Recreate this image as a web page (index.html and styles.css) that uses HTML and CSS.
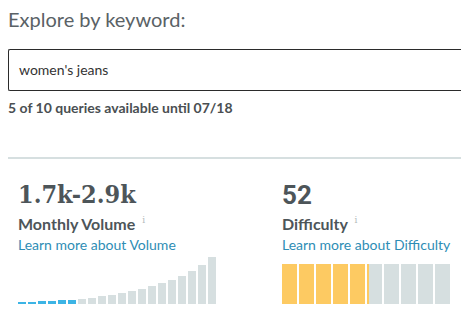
FILE: index.html
```html
<!DOCTYPE html>
<html lang="en">
<head>
    <meta charset="UTF-8">
    <meta name="viewport" content="width=device-width, initial-scale=1.0">
    <title>Explore by keyword</title>
    <link rel="stylesheet" href="styles.css">
</head>
<body>
    <div class="explorer">
        <h1>Explore by keyword:</h1>

        <div class="search-box">women's jeans</div>
        <p class="quota">5 of 10 queries available until 07/18</p>

        <hr class="divider">

        <div class="metrics">
            <div class="metric">
                <div class="metric-value slab">1.7k-2.9k</div>
                <div class="metric-label">Monthly Volume <sup class="info">i</sup></div>
                <a class="metric-link" href="#">Learn more about Volume</a>
                <div class="volume-chart">
                    <span class="bar on" style="height: 2px"></span>
                    <span class="bar on" style="height: 2px"></span>
                    <span class="bar on" style="height: 3px"></span>
                    <span class="bar on" style="height: 3px"></span>
                    <span class="bar on" style="height: 4px"></span>
                    <span class="bar on" style="height: 4px"></span>
                    <span class="bar" style="height: 5px"></span>
                    <span class="bar" style="height: 6px"></span>
                    <span class="bar" style="height: 8px"></span>
                    <span class="bar" style="height: 9px"></span>
                    <span class="bar" style="height: 11px"></span>
                    <span class="bar" style="height: 13px"></span>
                    <span class="bar" style="height: 15px"></span>
                    <span class="bar" style="height: 18px"></span>
                    <span class="bar" style="height: 21px"></span>
                    <span class="bar" style="height: 24px"></span>
                    <span class="bar" style="height: 28px"></span>
                    <span class="bar" style="height: 33px"></span>
                    <span class="bar" style="height: 39px"></span>
                    <span class="bar" style="height: 47px"></span>
                </div>
            </div>

            <div class="metric">
                <div class="metric-value sans">52</div>
                <div class="metric-label">Difficulty <sup class="info">i</sup></div>
                <a class="metric-link" href="#">Learn more about Difficulty</a>
                <div class="difficulty-chart">
                    <span class="seg on"></span>
                    <span class="seg on"></span>
                    <span class="seg on"></span>
                    <span class="seg on"></span>
                    <span class="seg on"></span>
                    <span class="seg part"></span>
                    <span class="seg"></span>
                    <span class="seg"></span>
                    <span class="seg"></span>
                    <span class="seg"></span>
                </div>
            </div>
        </div>
    </div>
</body>
</html>
```

FILE: styles.css
```css
body {
    margin: 0;
    font-family: Lato, "Open Sans", sans-serif;
    color: #4d5559;
    background-color: #fff;
    overflow: hidden;
}
.explorer {
    padding-left: 8px;
}
h1 {
    margin: 7px 0 0;
    font-size: 20px;
    font-weight: normal;
    line-height: 24px;
    color: #5a6266;
}
.search-box {
    height: 40px;
    margin-top: 18px;
    padding-left: 10px;
    border: 1px solid #2b2b2b;
    border-right: none;
    border-radius: 2px 0 0 2px;
    font-size: 14px;
    line-height: 40px;
    color: #333;
}
.quota {
    margin: 9px 0 0;
    font-size: 14px;
    font-weight: bold;
    line-height: 16px;
    color: #4a4f52;
}
.divider {
    margin: 41px 0 0;
    height: 2px;
    border: none;
    background-color: #d6dfe0;
}
.metrics {
    display: grid;
    grid-template-columns: 264px 180px;
    padding-left: 10px;
}
.metric-value {
    margin-top: 21px;
    height: 30px;
    line-height: 30px;
    font-weight: bold;
    color: #4d5559;
}
.metric-value.slab {
    font-family: "DejaVu Serif Condensed", "DejaVu Serif", serif;
    font-stretch: condensed;
    font-size: 25px;
}
.metric-value.sans {
    font-family: Roboto, "Liberation Sans", sans-serif;
    font-size: 26px;
}
.metric-label {
    font-size: 16px;
    font-weight: bold;
    line-height: 20px;
}
.info {
    margin-left: 3px;
    font-family: "DejaVu Serif", serif;
    font-size: 9px;
    font-weight: normal;
    color: #b3b9bb;
    vertical-align: 7px;
}
.metric-link {
    display: block;
    margin-top: 2px;
    font-size: 14px;
    line-height: 18px;
    color: #2e8db5;
    text-decoration: none;
}
.volume-chart {
    display: flex;
    align-items: flex-end;
    gap: 2px;
    height: 47px;
    margin-top: 3px;
}
.bar {
    width: 8px;
    background-color: #d6dfe0;
}
.bar.on {
    background-color: #3cb4e5;
}
.difficulty-chart {
    display: flex;
    gap: 2px;
    height: 40px;
    margin-top: 10px;
}
.seg {
    width: 15px;
    background-color: #d6dfe0;
}
.seg.on {
    background-color: #fdca62;
}
.seg.part {
    background: linear-gradient(to right, #fdca62 2px, #d6dfe0 2px);
}
```
